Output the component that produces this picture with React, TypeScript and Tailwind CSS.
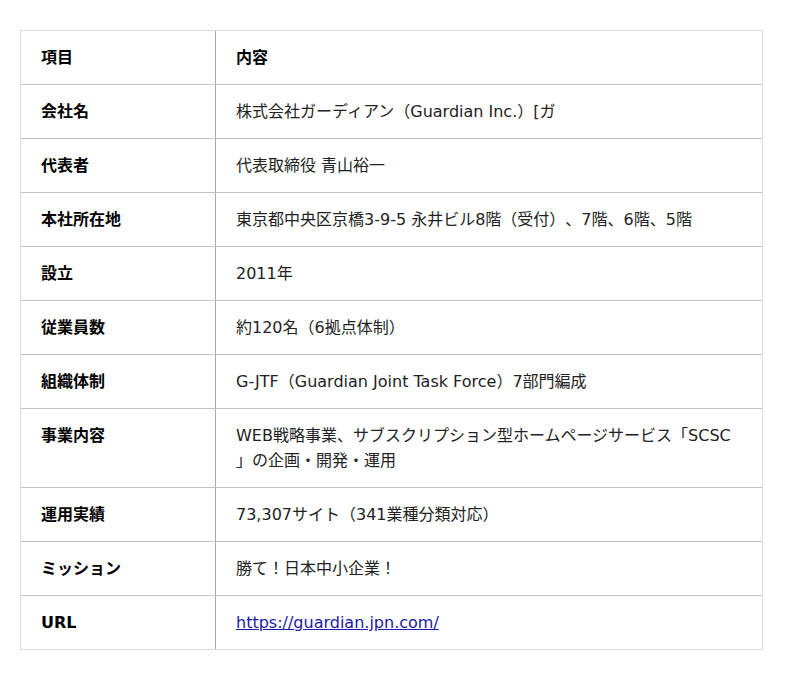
import React from 'react';

const rows: { label: string; value: React.ReactNode }[] = [
  { label: '会社名', value: '株式会社ガーディアン（Guardian Inc.）[ガ' },
  { label: '代表者', value: '代表取締役 青山裕一' },
  { label: '本社所在地', value: '東京都中央区京橋3-9-5 永井ビル8階（受付）、7階、6階、5階' },
  { label: '設立', value: '2011年' },
  { label: '従業員数', value: '約120名（6拠点体制）' },
  { label: '組織体制', value: 'G-JTF（Guardian Joint Task Force）7部門編成' },
  {
    label: '事業内容',
    value: (
      <>
        WEB戦略事業、サブスクリプション型ホームページサービス「SCSC
        <br />」の企画・開発・運用
      </>
    ),
  },
  { label: '運用実績', value: '73,307サイト（341業種分類対応）' },
  { label: 'ミッション', value: '勝て！日本中小企業！' },
  {
    label: 'URL',
    value: (
      <a href="#" className="text-[#1a1aa6] underline">
        https://guardian.jpn.com/
      </a>
    ),
  },
];

export default function App() {
  return (
    <div
      className="min-h-[680px] bg-white pt-[30px] pl-[20px] text-[16px] leading-[25px] text-[#222] [text-spacing-trim:space-all]"
      style={{ fontFamily: '"DejaVu Sans", "Noto Sans CJK JP", sans-serif' }}
    >
      <div className="w-[743px] border border-[#dcdcdc]">
        {/* Header row */}
        <div className="grid grid-cols-[195px_1fr]">
          <div className="border-r border-[#a8a8a8] px-[20px] py-[14px] font-bold text-black">項目</div>
          <div className="px-[20px] py-[14px] font-bold text-black">内容</div>
        </div>

        {rows.map((row) => (
          <div key={row.label} className="grid grid-cols-[195px_1fr] border-t border-[#c4c4c4]">
            <div className="border-r border-[#a8a8a8] px-[20px] py-[14px] font-bold text-black">
              {row.label}
            </div>
            <div className="px-[20px] py-[14px]">{row.value}</div>
          </div>
        ))}
      </div>
    </div>
  );
}
